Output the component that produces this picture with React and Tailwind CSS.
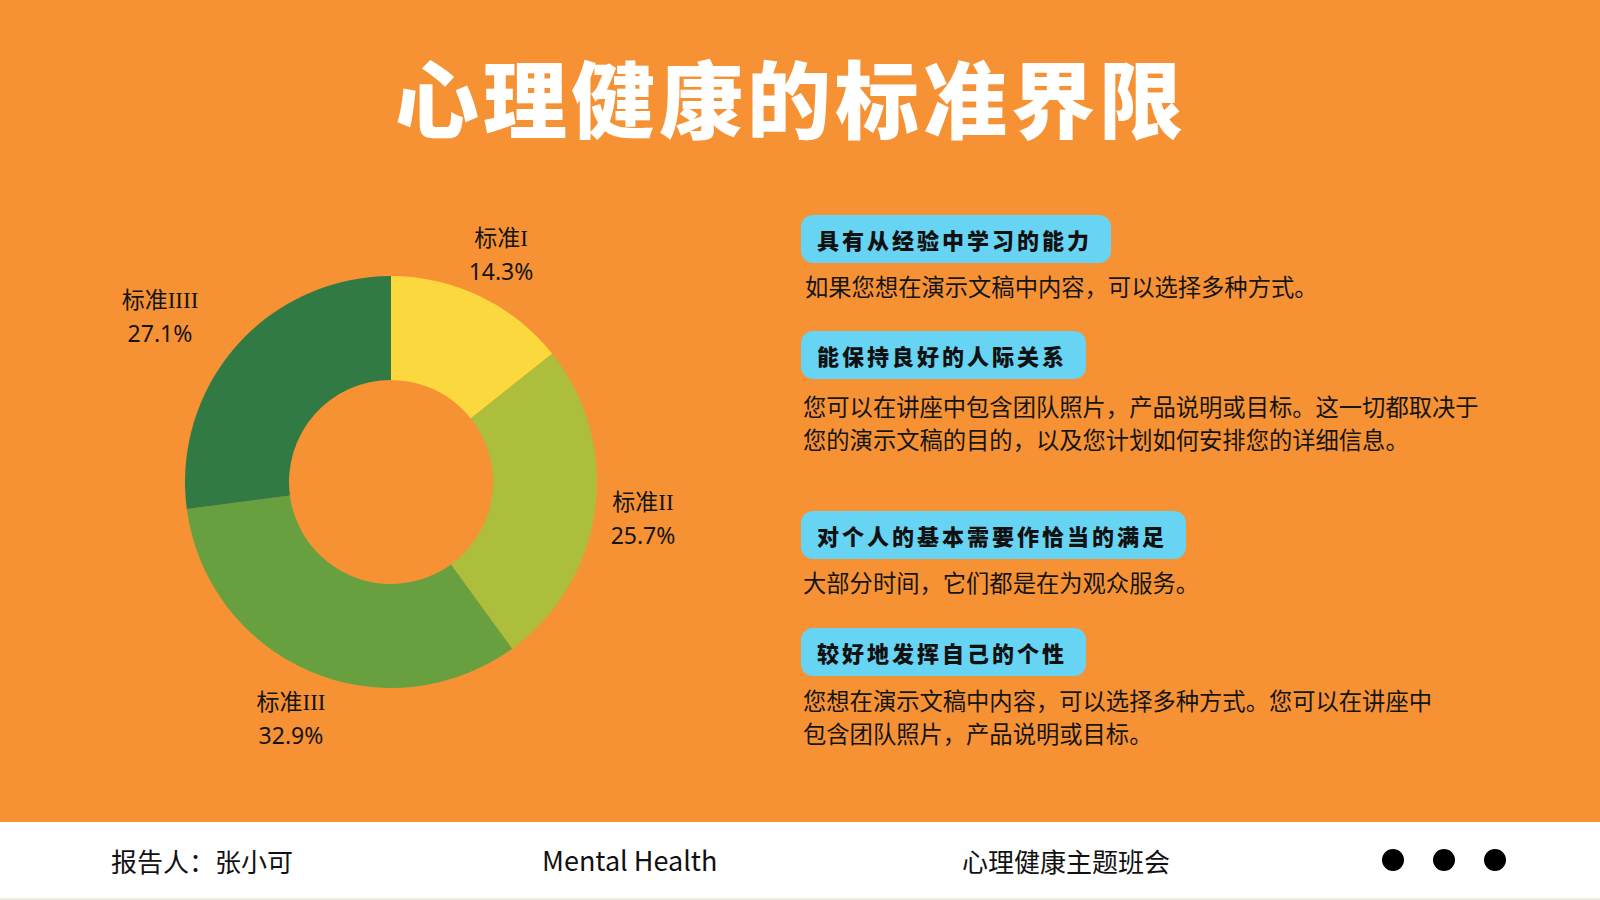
import React from "react";

const CX = 206;
const R = 206;
const r = 102;

function pt(rad, deg) {
  const a = ((deg - 90) * Math.PI) / 180;
  return [CX + rad * Math.cos(a), CX + rad * Math.sin(a)];
}

function seg(start, end) {
  const large = end - start > 180 ? 1 : 0;
  const [x1, y1] = pt(R, start);
  const [x2, y2] = pt(R, end);
  const [x3, y3] = pt(r, end);
  const [x4, y4] = pt(r, start);
  return `M${x1} ${y1} A${R} ${R} 0 ${large} 1 ${x2} ${y2} L${x3} ${y3} A${r} ${r} 0 ${large} 0 ${x4} ${y4} Z`;
}

const data = [
  { v: 14.3, c: "#FCD83F" },
  { v: 25.7, c: "#ACBE3B" },
  { v: 32.9, c: "#68A040" },
  { v: 27.1, c: "#327A44" },
];

function Donut() {
  let acc = 0;
  const total = data.reduce((s, d) => s + d.v, 0);
  return (
    <svg width="412" height="412" viewBox="0 0 412 412">
      {data.map((d, i) => {
        const s = (acc / total) * 360;
        acc += d.v;
        const e = (acc / total) * 360;
        return <path key={i} d={seg(s, e)} fill={d.c} />;
      })}
    </svg>
  );
}

function Label({ name, pct, className }) {
  return (
    <div
      className={
        "absolute -translate-x-1/2 text-center text-[23px] leading-[32px] text-[#151515] whitespace-nowrap " +
        className
      }
    >
      <div className="font-['Noto_Sans_CJK_SC',sans-serif]">
        标准
        <span className="font-['Liberation_Serif',serif]">{name}</span>
      </div>
      <div className="font-['Noto_Sans','Noto_Sans_CJK_SC',sans-serif]">{pct}</div>
    </div>
  );
}

function Pill({ children, className = "" }) {
  return (
    <div
      className={
        "self-start h-[48px] flex items-center pl-[16px] pr-[19px] rounded-[12px] bg-[#67D4F3] text-[22px] font-black tracking-[3px] text-[#111] whitespace-nowrap " +
        className
      }
    >
      {children}
    </div>
  );
}

function Body({ children, className = "" }) {
  return (
    <div
      className={
        "text-[23.3px] leading-[33px] text-[#151515] whitespace-nowrap " + className
      }
    >
      {children}
    </div>
  );
}

export default function App() {
  return (
    <div className="w-[1600px] h-[900px] bg-[#F69234] flex flex-col font-['Noto_Sans_CJK_SC',sans-serif] overflow-hidden">
      <div className="h-[200px] pt-[54px] pr-[18px] text-center">
        <h1 className="text-[84px] leading-none font-black tracking-[4px] text-white">
          心理健康的标准界限
        </h1>
      </div>

      <div className="flex-1 flex">
        <div className="relative w-[800px]">
          <div className="pl-[185px] pt-[76px]">
            <Donut />
          </div>
          <Label name="I" pct="14.3%" className="left-[501px] top-[20px]" />
          <Label name="IIII" pct="27.1%" className="left-[160px] top-[82px]" />
          <Label name="II" pct="25.7%" className="left-[643px] top-[284px]" />
          <Label name="III" pct="32.9%" className="left-[291px] top-[484px]" />
        </div>

        <div className="flex-1 flex flex-col pt-[15px] pl-[1px]">
          <Pill>具有从经验中学习的能力</Pill>
          <Body className="mt-[7px] pl-[4px]">如果您想在演示文稿中内容，可以选择多种方式。</Body>

          <Pill className="mt-[28px]">能保持良好的人际关系</Pill>
          <Body className="mt-[11px] pl-[2px]">
            您可以在讲座中包含团队照片，产品说明或目标。这一切都取决于
            <br />
            您的演示文稿的目的，以及您计划如何安排您的详细信息。
          </Body>

          <Pill className="mt-[55px]">对个人的基本需要作恰当的满足</Pill>
          <Body className="mt-[7px] pl-[2px]">大部分时间，它们都是在为观众服务。</Body>

          <Pill className="mt-[29px]">较好地发挥自己的个性</Pill>
          <Body className="mt-[8px] pl-[2px]">
            您想在演示文稿中内容，可以选择多种方式。您可以在讲座中
            <br />
            包含团队照片，产品说明或目标。
          </Body>
        </div>
      </div>

      <div className="h-[78px] bg-white border-b-2 border-[#EFECE6] flex items-center pl-[111px] text-[26px] text-[#111]">
        <div className="w-[431px]">报告人：张小可</div>
        <div className="w-[420px] text-[27px]">Mental Health</div>
        <div className="w-[420px]">心理健康主题班会</div>
        <div className="flex gap-[29px]">
          <span className="w-[22px] h-[22px] rounded-full bg-black" />
          <span className="w-[22px] h-[22px] rounded-full bg-black" />
          <span className="w-[22px] h-[22px] rounded-full bg-black" />
        </div>
      </div>
    </div>
  );
}
